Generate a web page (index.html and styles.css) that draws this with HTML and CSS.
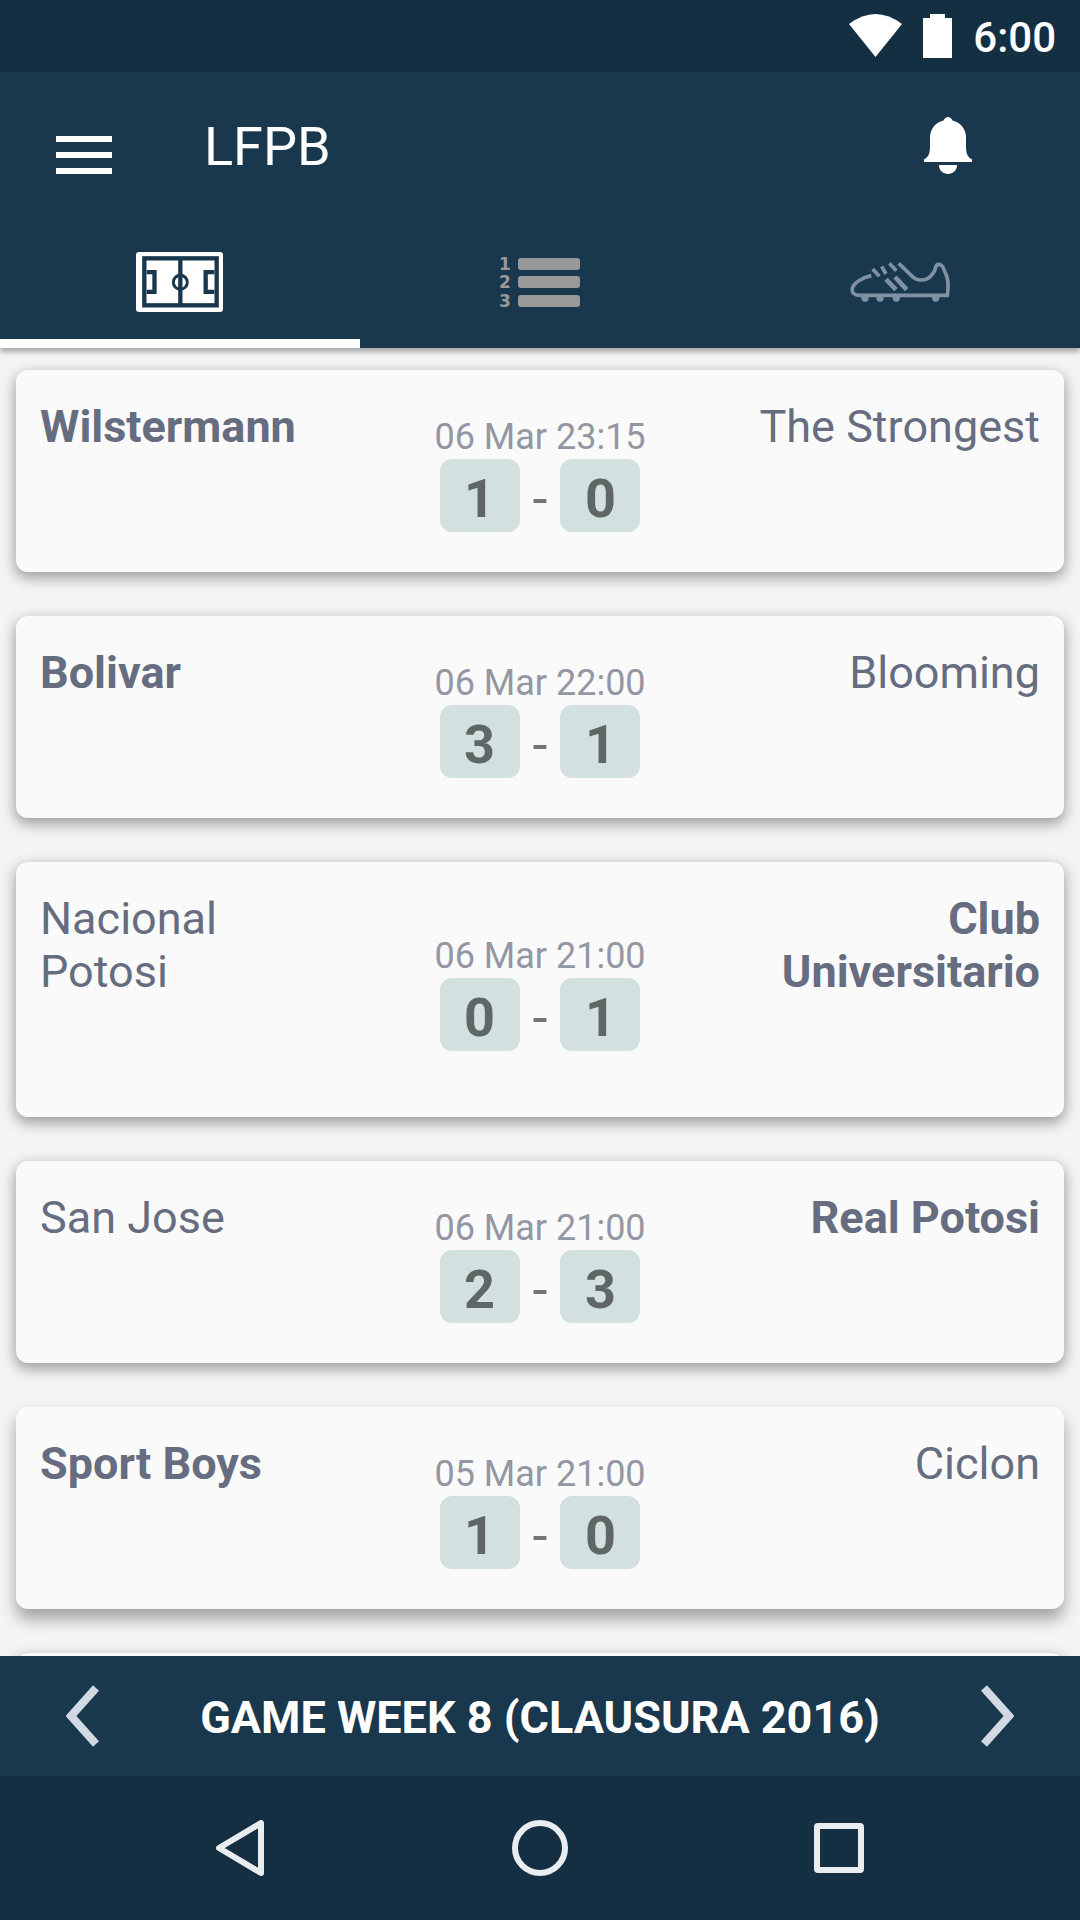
FILE: index.html
```html
<!DOCTYPE html>
<html lang="en">
<head>
<meta charset="utf-8">
<meta name="viewport" content="width=device-width, initial-scale=1">
<title>LFPB</title>
<link rel="stylesheet" href="styles.css">
</head>
<body>
<div class="app">
  <div class="status-bar">
    <svg class="wifi" width="53" height="44" viewBox="0 0 53 44" aria-hidden="true"><path d="M0 10Q26.500 -10 53 10L26.500 43Z" fill="#fff"/></svg>
    <svg class="battery" width="29" height="44" viewBox="0 0 29 44" aria-hidden="true"><path d="M7 0H22V4H29V44H0V4H7Z" fill="#fff"/></svg>
    <time class="clock">6:00</time>
  </div>

  <header class="header">
    <div class="toolbar">
      <button class="icon-button" type="button" aria-label="Menu">
        <svg width="56" height="56" viewBox="0 0 56 56"><path d="M0 15h56v6H0zM0 31h56v6H0zM0 47h56v6H0z" fill="#fff"/></svg>
      </button>
      <h1 class="title">LFPB</h1>
      <button class="icon-button" type="button" aria-label="Notifications">
        <svg width="48" height="64" viewBox="0 0 48 64"><path d="M24 0C26 0 27.500 1.500 28.500 3.500C37 5.500 41.500 12 42 20V31C42.500 38 44 40 48 42.500V45H0V42.500C4 40 5.500 38 6 31V20C6.500 12 11 5.500 19.500 3.500C20.500 1.500 22 0 24 0ZM15 48H33C33 53.500 29 57 24 57S15 53.500 15 48Z" fill="#fff"/></svg>
      </button>
    </div>
    <nav class="tabs" aria-label="Sections">
      <a class="tab tab-active" href="#matches" aria-label="Matches" aria-current="page">
        <svg width="88" height="60" viewBox="48 36 264 180">
          <rect x="48" y="36" width="261" height="180" rx="9" fill="#fff"/>
          <g fill="none" stroke="#1a384d" stroke-width="13">
            <rect x="73" y="55" width="217" height="141"/>
            <path d="M181 55V196"/>
            <path d="M80 96.500H103.500V155.500H80M283 96.500H257V155.500H283"/>
            <circle cx="181" cy="127" r="21" stroke-width="9"/>
          </g>
        </svg>
      </a>
      <a class="tab" href="#standings" aria-label="Standings">
        <svg class="list-icon" width="84" height="54" viewBox="-2 -2 84 54" fill="#999">
          <g class="rank"><text x="-1" y="13">1</text><text x="-1" y="31">2</text><text x="-1" y="50">3</text></g>
          <rect x="18" y="1" width="62" height="12" rx="3"/>
          <rect x="18" y="19" width="62" height="12" rx="3"/>
          <rect x="18" y="38" width="62" height="12" rx="3"/>
        </svg>
      </a>
      <a class="tab" href="#scorers" aria-label="Top scorers">
        <svg width="100" height="40" viewBox="30 66 300 120">
          <g fill="none" stroke="#8091a2" stroke-width="11">
            <path d="M94 107C70 112 40 128 37 146C35 158 42 166 58 166H322C326 140 324 112 314 94C309 84 310 73 294 73C285 74 289 88 280 98C268 116 260 120 240 120C222 120 214 105 176 70"/>
            <path d="M98 87L118 109M125 79L138 102M148 70L169 92"/>
            <path d="M138 118L168 149M165 111L200 149" stroke-width="14"/>
          </g>
          <g fill="#8091a2"><circle cx="75" cy="174" r="11"/><circle cx="120" cy="174" r="11"/><circle cx="169" cy="174" r="11"/><circle cx="287" cy="174" r="11"/></g>
        </svg>
      </a>
    </nav>
  </header>

  <main class="matches" id="matches">
    <article class="match">
      <p class="team winner">Wilstermann</p>
      <div class="result"><time class="date">06 Mar 23:15</time><div class="score"><span class="goals">1</span><span>-</span><span class="goals">0</span></div></div>
      <p class="team away">The Strongest</p>
    </article>
    <article class="match">
      <p class="team winner">Bolivar</p>
      <div class="result"><time class="date">06 Mar 22:00</time><div class="score"><span class="goals">3</span><span>-</span><span class="goals">1</span></div></div>
      <p class="team away">Blooming</p>
    </article>
    <article class="match">
      <p class="team">Nacional Potosi</p>
      <div class="result"><time class="date">06 Mar 21:00</time><div class="score"><span class="goals">0</span><span>-</span><span class="goals">1</span></div></div>
      <p class="team away winner">Club Universitario</p>
    </article>
    <article class="match">
      <p class="team">San Jose</p>
      <div class="result"><time class="date">06 Mar 21:00</time><div class="score"><span class="goals">2</span><span>-</span><span class="goals">3</span></div></div>
      <p class="team away winner">Real Potosi</p>
    </article>
    <article class="match match-raised">
      <p class="team winner">Sport Boys</p>
      <div class="result"><time class="date">05 Mar 21:00</time><div class="score"><span class="goals">1</span><span>-</span><span class="goals">0</span></div></div>
      <p class="team away">Ciclon</p>
    </article>
    <article class="match"></article>
  </main>

  <div class="week-bar">
    <button class="icon-button" type="button" aria-label="Previous week">
      <svg width="33" height="62" viewBox="0 0 33 62"><path d="M30 3L5 31L30 59" fill="none" stroke="#d3d9e2" stroke-width="8"/></svg>
    </button>
    <h2 class="week">GAME WEEK 8 (CLAUSURA 2016)</h2>
    <button class="icon-button" type="button" aria-label="Next week">
      <svg width="33" height="62" viewBox="0 0 33 62"><path d="M3 3L28 31L3 59" fill="none" stroke="#d3d9e2" stroke-width="8"/></svg>
    </button>
  </div>

  <nav class="system-nav" aria-label="System">
    <button class="icon-button" type="button" aria-label="Back">
      <svg width="56" height="56" viewBox="0 0 56 56"><path d="M45 3V53L3 28Z" fill="none" stroke="#e9edf0" stroke-width="6" stroke-linejoin="round"/></svg>
    </button>
    <button class="icon-button" type="button" aria-label="Home">
      <svg width="56" height="56" viewBox="0 0 56 56"><circle cx="28" cy="28" r="25" fill="none" stroke="#e9edf0" stroke-width="6"/></svg>
    </button>
    <button class="icon-button" type="button" aria-label="Recent apps">
      <svg width="56" height="56" viewBox="0 0 56 56"><rect x="9" y="6" width="44" height="44" rx="1" fill="none" stroke="#e9edf0" stroke-width="6" stroke-linejoin="round"/></svg>
    </button>
  </nav>
</div>
</body>
</html>
```

FILE: styles.css
```css
* {
  box-sizing: border-box;
}

body {
  margin: 0;
  background: #f4f4f4;
  font-family: Roboto, "Liberation Sans", sans-serif;
}

h1, h2, p {
  margin: 0;
}

svg {
  display: block;
}

.app {
  display: flex;
  flex-direction: column;
  height: 100vh;
}

.status-bar {
  flex: none;
  display: flex;
  align-items: center;
  justify-content: flex-end;
  gap: 21px;
  height: 72px;
  padding: 0 24px;
  background: #152f42;
}

.clock {
  padding-top: 4px;
  color: #fff;
  font-size: 42px;
  font-weight: 500;
  line-height: 48px;
}

.header {
  position: relative;
  z-index: 1;
  flex: none;
  background: #1a384d;
  box-shadow: 0 4px 5px rgba(0, 0, 0, 0.3);
}

.toolbar {
  display: flex;
  align-items: center;
  gap: 92px;
  height: 153px;
  padding: 0 108px 0 56px;
}

.icon-button {
  flex: none;
  padding: 0;
  border: 0;
  background: none;
}

.title {
  flex: 1;
  padding-bottom: 4px;
  color: #fff;
  font-size: 54px;
  font-weight: 400;
  line-height: 63px;
}

.tabs {
  display: grid;
  grid-template-columns: repeat(3, 1fr);
}

.tab {
  display: flex;
  align-items: center;
  justify-content: center;
  height: 123px;
  border-bottom: 9px solid transparent;
}

.tab-active {
  border-color: #fff;
}

.list-icon {
  overflow: visible;
}

.rank {
  font: bold 17px "DejaVu Sans", sans-serif;
}

.matches {
  flex: 1;
  display: flex;
  flex-direction: column;
  gap: 44px;
  min-height: 0;
  padding: 22px 16px;
  overflow-y: auto;
  scrollbar-width: none;
}

.match {
  flex: none;
  display: grid;
  grid-template-columns: 3fr 4fr 3fr;
  min-height: 202px;
  padding: 30px 24px 24px;
  border-radius: 12px;
  background: #fafafa;
  box-shadow: 0 5px 14px 1px rgba(0, 0, 0, 0.36);
}

.match-raised {
  box-shadow: 0 10px 16px rgba(0, 0, 0, 0.34);
}

.team {
  padding-bottom: 95px;
  color: #666d80;
  font-size: 45px;
  line-height: 53px;
}

.away {
  text-align: right;
}

.winner {
  font-weight: 700;
}

.result {
  display: flex;
  flex-direction: column;
  align-items: center;
  justify-content: center;
}

.date {
  color: #9397a3;
  font-size: 36px;
  line-height: 43px;
}

.score {
  display: flex;
  align-items: baseline;
  gap: 13px;
  color: #757575;
  font-size: 54px;
  line-height: 63px;
}

.goals {
  width: 80px;
  padding: 8px 0 2px;
  border-radius: 12px;
  background: #d2e0e0;
  color: #5f6666;
  font-weight: 700;
  text-align: center;
}

.week-bar {
  z-index: 1;
  flex: none;
  display: flex;
  align-items: center;
  justify-content: space-between;
  height: 120px;
  padding: 0 66px;
  background: #1a384d;
}

.week {
  padding-top: 2px;
  color: #fff;
  font-size: 45px;
  font-weight: 700;
  line-height: 53px;
}

.system-nav {
  flex: none;
  display: flex;
  align-items: center;
  justify-content: space-between;
  height: 144px;
  padding: 0 20%;
  background: #152f42;
}
```
